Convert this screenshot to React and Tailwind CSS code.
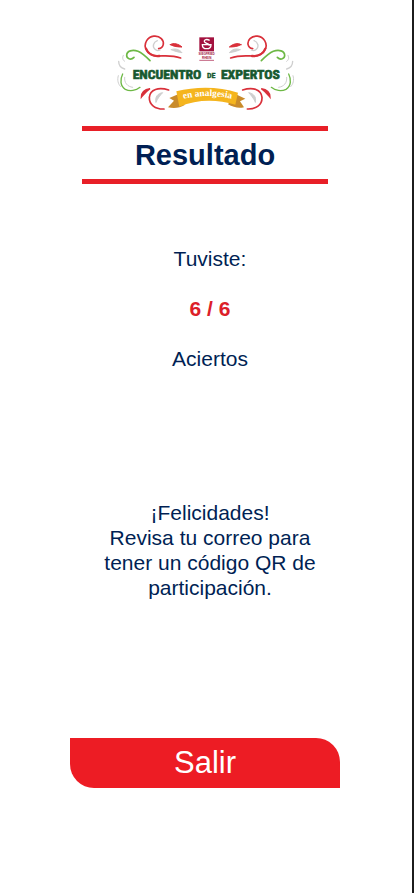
function Swirls() {
  return (
    <g fill="none" strokeLinecap="round">
      <path d="M146 62C162 60 164 42 154 32C142 20 120 22 110 38C98 58 112 82 142 84C166 84 184 80 212 90" stroke="#d9303a" strokeWidth="5" />
      <path d="M108 62C114 78 130 86 148 84" stroke="#d9303a" strokeWidth="7" />
      <path d="M142 38C130 42 126 56 135 64C139 68 146 68 150 66" stroke="#cfcfcf" strokeWidth="4" />
      <path d="M181 50C190 43 206 48 216 57C204 57 192 56 181 50Z" fill="#d9303a" stroke="#d9303a" strokeWidth="3" />
      <path d="M184 65C196 60 208 64 216 74C204 72 194 70 184 65Z" fill="#cfcfcf" stroke="#cfcfcf" strokeWidth="3" />
      <path d="M72 88C62 98 50 92 50 82C50 68 68 64 84 70C98 76 108 86 120 98" stroke="#6db845" strokeWidth="5" />
      <path d="M40 82C36 90 38 96 44 100" stroke="#cfcfcf" strokeWidth="3" />
      <path d="M26 100C26 112 32 120 44 123" stroke="#cfcfcf" strokeWidth="4" />
      <path d="M38 138C30 154 30 174 46 184C60 191 78 188 90 178" stroke="#6db845" strokeWidth="4" />
      <path d="M44 148C42 164 52 176 68 178" stroke="#cfcfcf" strokeWidth="3" />
      <path d="M25 143C21 156 24 168 32 176" stroke="#cfcfcf" strokeWidth="3" />
      <path d="M94 208C94 192 104 184 120 182C108 190 102 198 94 208Z" fill="#d9303a" stroke="#d9303a" strokeWidth="4" />
      <path d="M176 186C146 176 120 184 118 208C117 230 136 244 162 243" stroke="#d9303a" strokeWidth="5" />
      <path d="M138 222C134 206 144 196 158 194C150 202 144 210 138 222Z" fill="#cfcfcf" stroke="#cfcfcf" strokeWidth="3" />
    </g>
  )
}

function Logo() {
  return (
    <svg viewBox="0 0 570 270" className="h-[90px] w-[190px]" role="img" aria-label="Encuentro de Expertos en analgesia">
      <Swirls />
      <g transform="matrix(-1 0 0 1 574 0)">
        <Swirls />
      </g>
      <rect x="268" y="28" width="44" height="42" fill="#a3123f" />
      <path d="M299 37C287 31 278 38 286 44C293 48 299 48 297 53M277 50C277 66 303 66 303 50Z" fill="none" stroke="#fff" strokeWidth="4" />
      <g fontFamily="'Liberation Sans', Arial, sans-serif" fontWeight="700" fontSize="9" fill="#a3123f" textAnchor="middle">
        <text x="290" y="82">SIEGFRIED</text>
        <text x="290" y="92">RHEIN</text>
      </g>
      <path d="M268 97H312" stroke="#a3123f" strokeWidth="2" />
      <g
        fontFamily="'Roboto Condensed', 'Open Sans Condensed', 'Liberation Sans Narrow', 'Liberation Sans', sans-serif"
        fontWeight="700"
        fill="#17582f"
        stroke="#17582f"
        textAnchor="middle"
      >
        <text x="171" y="153" fontSize="41" strokeWidth="2">ENCUENTRO</text>
        <text x="304" y="151" fontSize="24" strokeWidth="1">DE</text>
        <text x="421" y="153" fontSize="41" strokeWidth="2">EXPERTOS</text>
      </g>
      <path d="M206 198L178 210L192 218L174 238C192 242 210 240 224 231Z" fill="#c98b2b" />
      <path d="M376 198L406 212L390 220L402 238C386 242 370 238 354 229Z" fill="#c98b2b" />
      <path d="M199 190C258 175 326 175 384 194L376 230C320 213 262 213 208 236Z" fill="#f5b51e" />
      <path id="ribbon-line" d="M205 217C258 200 322 200 380 216" fill="none" />
      <text fontFamily="'Liberation Serif', 'Times New Roman', serif" fontWeight="700" fontSize="28" fill="#fff" textAnchor="middle">
        <textPath href="#ribbon-line" startOffset="50%">en analgesia</textPath>
      </text>
    </svg>
  )
}

export default function App() {
  return (
    <div className="min-h-screen border-r-2 border-[#1c1c1c] bg-white font-['Liberation_Sans',Arial,sans-serif] text-[#001f54]">
      <main className="flex flex-col items-center pt-7 pr-0.5">
        <Logo />
        <h1 className="mt-2 w-3/5 border-y-[5px] border-[#e81f27] py-1.5 text-center text-[29px] leading-9 font-bold">
          Resultado
        </h1>
        <section className="mt-[62px] flex flex-col gap-[25px] pl-2.5 text-center text-[21px] leading-[25px]">
          <p>Tuviste:</p>
          <p className="font-bold text-[#dc2029]">6 / 6</p>
          <p>Aciertos</p>
        </section>
        <section className="mt-[129px] w-60 pl-2.5 text-center text-[21px] leading-[25px]">
          <p>¡Felicidades!</p>
          <p>Revisa tu correo para tener un código QR de participación.</p>
        </section>
        <button
          type="button"
          className="mt-[138px] h-[50px] w-[270px] rounded-tr-3xl rounded-bl-3xl bg-[#ed1c24] text-[31px] leading-[50px] text-white"
        >
          Salir
        </button>
      </main>
    </div>
  )
}
